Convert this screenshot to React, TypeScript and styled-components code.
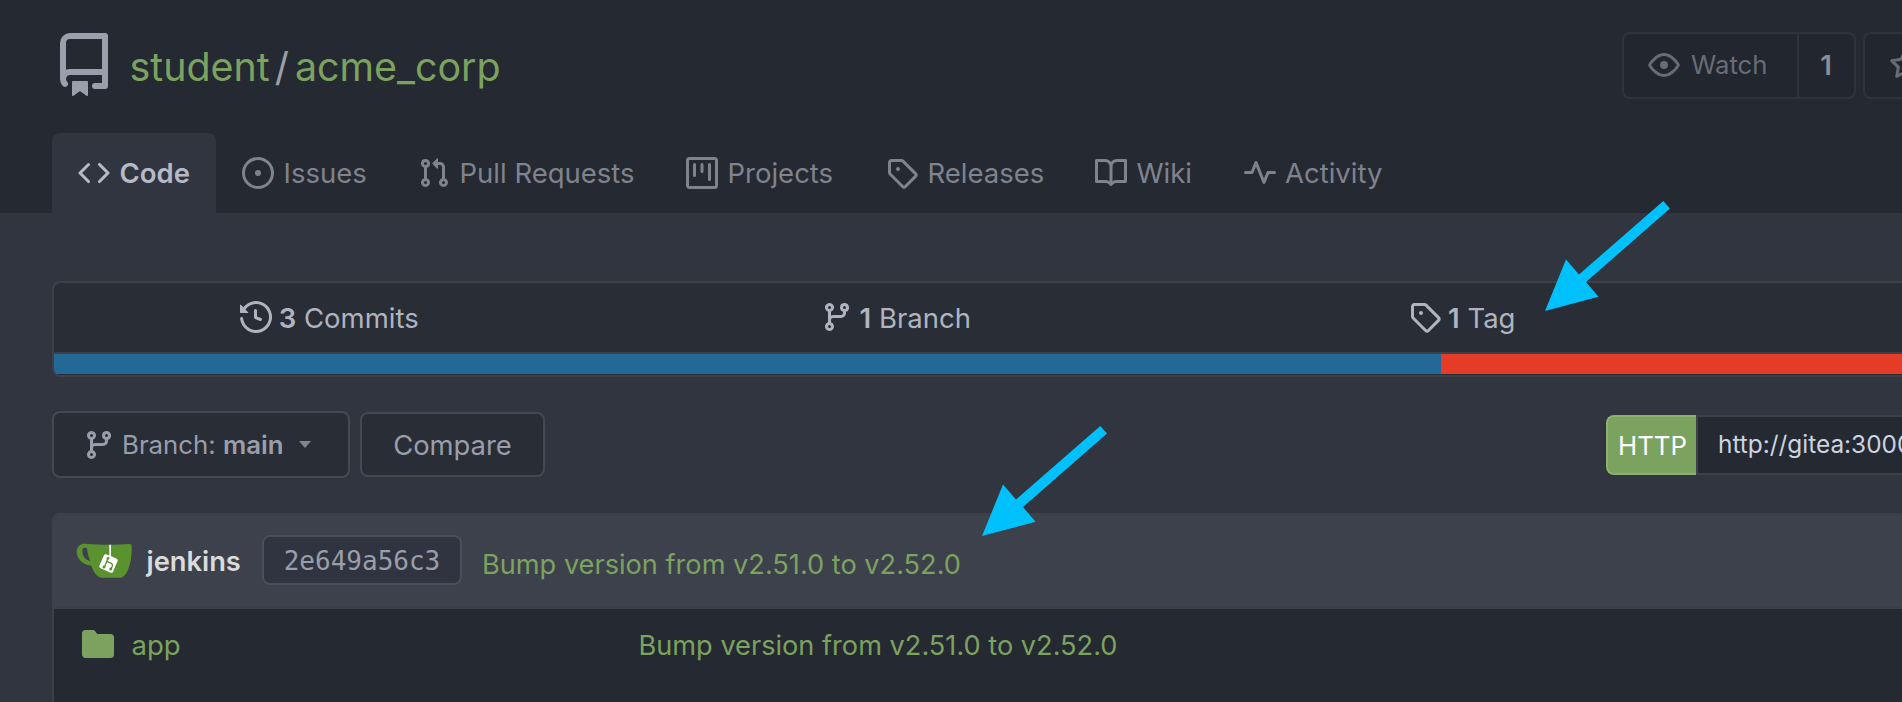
import React from 'react';
import styled, { createGlobalStyle } from 'styled-components';

const color = {
  page: '#313540',
  header: '#252931',
  box: '#292d36',
  border: '#3d4049',
  green: '#7ca25f',
  text: '#b0b4c0',
  muted: '#7f838e',
  button: '#9a9eaa',
};

const GlobalStyle = createGlobalStyle`
  * { box-sizing: border-box; }
  body {
    margin: 0;
    background: ${color.page};
    font-family: Inter, "Liberation Sans", sans-serif;
    overflow: hidden;
  }
`;

/* 16-unit octicon outlines */
const icons = {
  repo: 'M2 2.5A2.5 2.5 0 014.5 0h8.75a.75.75 0 01.75.75v12.5a.75.75 0 01-.75.75h-2.5a.75.75 0 110-1.5h1.75v-2h-8a1 1 0 00-.714 1.7.75.75 0 01-1.072 1.05A2.495 2.495 0 012 11.5v-9zm10.5-1V9h-8c-.356 0-.694.074-1 .208V2.5a1 1 0 011-1h8zM5 12.25v3.25a.25.25 0 00.4.2l1.45-1.087a.25.25 0 01.3 0L8.6 15.7a.25.25 0 00.4-.2v-3.25a.25.25 0 00-.25-.25h-3.5a.25.25 0 00-.25.25z',
  code: 'M4.72 3.22a.75.75 0 011.06 1.06L2.06 8l3.72 3.72a.75.75 0 11-1.06 1.06L.47 8.53a.75.75 0 010-1.06l4.25-4.25zm6.56 0a.75.75 0 10-1.06 1.06L13.94 8l-3.72 3.72a.75.75 0 101.06 1.06l4.25-4.25a.75.75 0 000-1.06l-4.25-4.25z',
  issue: 'M8 9.5a1.5 1.5 0 100-3 1.5 1.5 0 000 3zM8 0a8 8 0 100 16A8 8 0 008 0zM1.5 8a6.5 6.5 0 1113 0 6.5 6.5 0 01-13 0z',
  pull: 'M7.177 3.073L9.573.677A.25.25 0 0110 .854v4.792a.25.25 0 01-.427.177L7.177 3.427a.25.25 0 010-.354zM3.75 2.5a.75.75 0 100 1.5.75.75 0 000-1.5zm-2.25.75a2.25 2.25 0 113 2.122v5.256a2.251 2.251 0 11-1.5 0V5.372A2.25 2.25 0 011.5 3.25zM11 2.5h-1V4h1a1 1 0 011 1v5.628a2.251 2.251 0 101.5 0V5A2.5 2.5 0 0011 2.5zm1 10.25a.75.75 0 111.5 0 .75.75 0 01-1.5 0zM3.75 12a.75.75 0 100 1.5.75.75 0 000-1.5z',
  project: 'M1.75 0A1.75 1.75 0 000 1.75v12.5C0 15.216.784 16 1.75 16h12.5A1.75 1.75 0 0016 14.25V1.75A1.75 1.75 0 0014.25 0H1.75zM1.5 1.75a.25.25 0 01.25-.25h12.5a.25.25 0 01.25.25v12.5a.25.25 0 01-.25.25H1.75a.25.25 0 01-.25-.25V1.75zM11.75 3a.75.75 0 00-.75.75v7.5a.75.75 0 001.5 0v-7.5a.75.75 0 00-.75-.75zm-8.25.75a.75.75 0 011.5 0v5.5a.75.75 0 01-1.5 0v-5.5zM8 3a.75.75 0 00-.75.75v3.5a.75.75 0 001.5 0v-3.5A.75.75 0 008 3z',
  tag: 'M2.5 7.775V2.75a.25.25 0 01.25-.25h5.025a.25.25 0 01.177.073l6.25 6.25a.25.25 0 010 .354l-5.025 5.025a.25.25 0 01-.354 0l-6.25-6.25a.25.25 0 01-.073-.177zm-1.5 0V2.75C1 1.784 1.784 1 2.75 1h5.025c.464 0 .91.184 1.238.513l6.25 6.25a1.75 1.75 0 010 2.474l-5.026 5.026a1.75 1.75 0 01-2.474 0l-6.25-6.25A1.75 1.75 0 011 7.775zM6 5a1 1 0 100 2 1 1 0 000-2z',
  book: 'M0 1.75A.75.75 0 01.75 1h4.253c1.227 0 2.317.59 3 1.501A3.744 3.744 0 0111.006 1h4.245a.75.75 0 01.75.75v10.5a.75.75 0 01-.75.75h-4.507a2.25 2.25 0 00-1.591.659l-.622.621a.75.75 0 01-1.06 0l-.622-.621A2.25 2.25 0 005.258 13H.75a.75.75 0 01-.75-.75V1.75zm8.755 3a2.25 2.25 0 012.25-2.25H14.5v9h-3.757c-.71 0-1.4.201-1.992.572l.004-7.322zm-1.504 7.324l.004-5.073-.002-2.253A2.25 2.25 0 005.003 2.5H1.5v9h3.757a3.75 3.75 0 011.994.574z',
  pulse: 'M6 2a.75.75 0 01.696.471L10 10.731l1.304-3.26A.75.75 0 0112 7h3.25a.75.75 0 010 1.5h-2.742l-1.812 4.528a.75.75 0 01-1.392 0L6 4.77 4.696 8.03A.75.75 0 014 8.5H.75a.75.75 0 010-1.5h2.742l1.812-4.529A.75.75 0 016 2z',
  eye: 'M1.679 7.932c.412-.621 1.242-1.75 2.366-2.717C5.175 4.242 6.527 3.5 8 3.5c1.473 0 2.824.742 3.955 1.715 1.124.967 1.954 2.096 2.366 2.717a.119.119 0 010 .136c-.412.621-1.242 1.75-2.366 2.717C10.825 11.758 9.473 12.5 8 12.5c-1.473 0-2.824-.742-3.955-1.715C2.92 9.818 2.09 8.69 1.679 8.068a.119.119 0 010-.136zM8 2c-1.981 0-3.67.992-4.933 2.078C1.797 5.169.88 6.423.43 7.1a1.619 1.619 0 000 1.798c.45.678 1.367 1.932 2.637 3.024C4.329 13.008 6.019 14 8 14c1.981 0 3.67-.992 4.933-2.078 1.27-1.091 2.187-2.345 2.637-3.023a1.619 1.619 0 000-1.798c-.45-.678-1.367-1.932-2.637-3.023C11.671 2.992 9.981 2 8 2zm0 8a2 2 0 100-4 2 2 0 000 4z',
  star: 'M8 .25a.75.75 0 01.673.418l1.882 3.815 4.21.612a.75.75 0 01.416 1.279l-3.046 2.97.719 4.192a.75.75 0 01-1.088.791L8 12.347l-3.766 1.98a.75.75 0 01-1.088-.79l.72-4.194L.818 6.374a.75.75 0 01.416-1.28l4.21-.611L7.327.668A.75.75 0 018 .25zm0 2.445L6.615 5.5a.75.75 0 01-.564.41l-3.097.45 2.24 2.184a.75.75 0 01.216.664l-.528 3.084 2.769-1.456a.75.75 0 01.698 0l2.77 1.456-.53-3.084a.75.75 0 01.216-.664l2.24-2.183-3.096-.45a.75.75 0 01-.564-.41L8 2.694v.001z',
  history: 'M1.643 3.143L.427 1.927A.25.25 0 000 2.104V5.75c0 .138.112.25.25.25h3.646a.25.25 0 00.177-.427L2.715 4.215a6.5 6.5 0 11-1.18 4.458.75.75 0 10-1.493.154 8.001 8.001 0 101.6-5.684zM7.75 4a.75.75 0 01.75.75v2.992l2.028.812a.75.75 0 01-.557 1.392l-2.5-1A.75.75 0 017 8.25v-3.5A.75.75 0 017.75 4z',
  branch: 'M11.75 2.5a.75.75 0 100 1.5.75.75 0 000-1.5zm-2.25.75a2.25 2.25 0 113 2.122V6A2.5 2.5 0 0110 8.5H6a1 1 0 00-1 1v1.128a2.251 2.251 0 11-1.5 0V5.372a2.25 2.25 0 111.5 0v1.836A2.492 2.492 0 016 7h4a1 1 0 001-1v-.628A2.25 2.25 0 019.5 3.25zM4.25 12a.75.75 0 100 1.5.75.75 0 000-1.5zM3.5 3.25a.75.75 0 111.5 0 .75.75 0 01-1.5 0z',
  folder: 'M1.75 1A1.75 1.75 0 000 2.75v10.5C0 14.216.784 15 1.75 15h12.5A1.75 1.75 0 0016 13.25v-8.5A1.75 1.75 0 0014.25 3h-6.5a.25.25 0 01-.2-.1l-.9-1.2c-.33-.44-.85-.7-1.4-.7h-3.5z',
};

type IconName = keyof typeof icons;

const Svg = styled.svg`
  display: block;
  flex: none;
  fill: currentColor;
`;

const Icon = ({ name, size = 32 }: { name: IconName; size?: number }) => (
  <Svg width={size} height={size} viewBox="0 0 16 16" aria-hidden="true">
    <path fillRule="evenodd" d={icons[name]} />
  </Svg>
);

const Page = styled.div`
  position: relative;
  display: flex;
  flex-direction: column;
  width: 100%;
  height: 702px;
  overflow: hidden;
  color: ${color.text};
  font-size: 27.5px;
  line-height: 32px;
  white-space: nowrap;
`;

const Header = styled.header`
  display: flex;
  flex-direction: column;
  flex: none;
  height: 213px;
  padding-left: 52px;
  background: ${color.header};
`;

const TitleRow = styled.div`
  display: flex;
  align-items: center;
  height: 133px;
  padding-bottom: 3px;
  color: #9b9fab;
`;

const Title = styled.h1`
  display: flex;
  flex: 1;
  margin: 0;
  padding: 3px 0 0 13.5px;
  font-size: 39.4px;
  font-weight: 400;
  line-height: 48px;
`;

const RepoLink = styled.a`
  color: ${color.green};
`;

const Slash = styled.span`
  padding: 0 6px 0 5px;
`;

const Actions = styled.div`
  display: flex;
  flex: none;
  gap: 7px;
  width: 280px;
`;

const ActionGroup = styled.div`
  display: flex;
  flex: none;
  height: 67px;
  overflow: hidden;
  border: 2px solid #2f333c;
  border-radius: 8px;
  background: #22262f;
  color: #686c77;
  font-size: 25.7px;
`;

const ActionLabel = styled.div`
  display: flex;
  align-items: center;
  gap: 11px;
  width: 173px;
  padding-left: 24px;
`;

const ActionCount = styled.div`
  display: flex;
  align-items: center;
  justify-content: center;
  width: 57px;
  padding-right: 1px;
  border-left: 2px solid #2f333c;
  color: #8a8e99;
  font-size: 27.5px;
  font-weight: 600;
`;

const Tabs = styled.nav`
  display: flex;
  height: 80px;
`;

const Tab = styled.a<{ $width: number; $active?: boolean }>`
  display: flex;
  align-items: center;
  gap: 9.5px;
  width: ${(p) => p.$width}px;
  padding-left: 26px;
  border-radius: 8px 8px 0 0;
  background: ${(p) => (p.$active ? color.page : 'transparent')};
  color: ${(p) => (p.$active ? '#b6bac5' : color.muted)};
  font-weight: ${(p) => (p.$active ? 600 : 400)};
`;

const Content = styled.main`
  display: flex;
  flex-direction: column;
  padding: 68px 0 0 52px;
`;

const StatsBox = styled.section`
  flex: none;
  height: 96px;
  overflow: hidden;
  border: 2px solid ${color.border};
  border-right: 0;
  border-radius: 8px 0 0 8px;
  background: ${color.box};
`;

const Stats = styled.div`
  display: grid;
  grid-template-columns: 566.5px 566.5px 566.5px;
  height: 71px;
  border-bottom: 2px solid ${color.border};
`;

const Stat = styled.div`
  display: flex;
  align-items: center;
  justify-content: center;
  gap: 7px;
  padding: 0 16px 1px 0;
`;

const StatText = styled.span`
  padding-top: 2px;
`;

const Strong = styled.strong`
  font-weight: 600;
`;

const LanguageBar = styled.div`
  display: flex;
  height: 20px;
`;

const Language = styled.div<{ $color: string; $width?: number }>`
  flex: ${(p) => (p.$width ? `0 0 ${p.$width}px` : '1')};
  background: ${(p) => p.$color};
`;

const Toolbar = styled.div`
  display: flex;
  align-items: center;
  flex: none;
  height: 67px;
  margin: 34px 0 35px;
`;

const Button = styled.button<{ $width: number; $height: number }>`
  display: flex;
  align-items: center;
  justify-content: center;
  width: ${(p) => p.$width}px;
  height: ${(p) => p.$height}px;
  margin: 0 10.5px 0 0;
  padding: 0;
  border: 2px solid #464853;
  border-radius: 8px;
  background: ${color.box};
  color: ${color.button};
  font: 400 27.4px/32px Inter, "Liberation Sans", sans-serif;
`;

const BranchButton = styled(Button)`
  justify-content: flex-start;
  padding-left: 29px;
`;

const BranchText = styled.span`
  padding: 1px 15.5px 0 7px;
  font-size: 25.8px;
`;

const Caret = styled.span`
  width: 0;
  border: solid transparent;
  border-width: 7.5px 6.5px 0;
  border-top-color: #81858f;
`;

const CloneUrl = styled.div`
  display: flex;
  width: 296px;
  height: 60px;
  margin-left: auto;
`;

const Protocol = styled.button`
  flex: none;
  width: 90px;
  padding: 2px 0 0 1px;
  border: 2px solid #8cb06e;
  border-right-width: 0;
  border-radius: 8px 0 0 8px;
  background: ${color.green};
  color: #fff;
  font: 400 25.8px/32px Inter, "Liberation Sans", sans-serif;
`;

const Url = styled.div`
  flex: 1;
  overflow: hidden;
  padding: 11px 0 0 20px;
  border: 2px solid ${color.border};
  border-right: 0;
  background: ${color.header};
  color: #cbd4e1;
  font-size: 24.4px;
`;

const FileTable = styled.section`
  flex: none;
  border: 2px solid ${color.border};
  border-right: 0;
  border-radius: 8px 0 0 0;
  background: ${color.header};
  overflow: hidden;
`;

const LatestCommit = styled.div`
  display: flex;
  align-items: center;
  height: 94px;
  padding-left: 22px;
  border-bottom: 2px solid #3a3e49;
  background: #3d414b;
`;

const Author = styled.span`
  width: 115.5px;
  margin-left: 14.5px;
  padding-top: 2px;
  color: #dbdbdb;
  font-size: 27.3px;
  font-weight: 600;
`;

const Sha = styled.span`
  display: flex;
  align-items: center;
  justify-content: center;
  width: 200px;
  height: 50px;
  margin-bottom: 2px;
  padding-top: 2px;
  border: 2px solid #4b4e5a;
  border-radius: 8px;
  background: #303440;
  color: #9a9eaa;
  font: 26px/30px "DejaVu Sans Mono", monospace;
`;

const CommitMessage = styled.a`
  color: ${color.green};
  font-size: 27.17px;
`;

const HeaderMessage = styled(CommitMessage)`
  padding: 8px 0 0 20px;
`;

const FileRow = styled.div<{ $height: number }>`
  display: grid;
  grid-template-columns: 556.5px 1fr;
  align-items: center;
  height: ${(p) => p.$height}px;
  padding-left: 28px;
  border-bottom: 1px solid #282b34;
  color: ${color.green};
`;

const RowMessage = styled(CommitMessage)`
  padding-top: 1px;
`;

const FileName = styled.a`
  display: flex;
  align-items: center;
  gap: 17.5px;
  padding-bottom: 3px;
`;

const FileLabel = styled.span`
  padding-top: 2px;
`;

const Arrow = styled.svg<{ $left: number; $top: number }>`
  position: absolute;
  left: ${(p) => p.$left}px;
  top: ${(p) => p.$top}px;
  width: 125px;
  height: 110px;
  fill: #00c1fc;
`;

const Pointer = ({ left, top }: { left: number; top: number }) => (
  <Arrow $left={left} $top={top} viewBox="0 0 125 110">
    <path d="M0 110 L21 58.5 L34 73.5 L118.3 0 L125 7.5 L41 81 L53.5 95.7Z" />
  </Arrow>
);

const Avatar = () => (
  <Svg width="56" height="56" viewBox="18 9 168 168" aria-hidden="true">
    <path
      fill="#59922f"
      fillRule="evenodd"
      d="M52 42C37 38 21 45 20 64C20 86 36 104 64 107C68 121 78 136 88 141Q92 144 99 143L153 143Q161 142 169 130C182 108 186 76 185 47Q185 42 180 42C140 45 90 45 52 42ZM37 63Q37 54 44 53.500L51 54C52 67 55 80 61 93C46 91 37 78 37 63Z"
    />
    <path fill="#fff" d="M118 44h5v34l17 8q5 3 3 7l-14 32q-2 5-7 3l-30-13q-6-3-4-8l14-31q2-5 7-3l9 4z" />
    <g fill="none" stroke="#59922f" strokeWidth="4">
      <path d="M114 85L103 112M110 94l14 6q5 3 3 8l-4 9" />
    </g>
    <g fill="#59922f">
      <circle cx="114" cy="85" r="4" />
      <circle cx="102" cy="111" r="4.500" />
      <circle cx="122" cy="117" r="4.500" />
    </g>
  </Svg>
);

const tabs: { icon: IconName; label: string; width: number }[] = [
  { icon: 'code', label: 'Code', width: 164 },
  { icon: 'issue', label: 'Issues', width: 176 },
  { icon: 'pull', label: 'Pull Requests', width: 268 },
  { icon: 'project', label: 'Projects', width: 200 },
  { icon: 'tag', label: 'Releases', width: 209 },
  { icon: 'book', label: 'Wiki', width: 148.5 },
  { icon: 'pulse', label: 'Activity', width: 164 },
];

const stats: { icon: IconName; count: number; label: string }[] = [
  { icon: 'history', count: 3, label: 'Commits' },
  { icon: 'branch', count: 1, label: 'Branch' },
  { icon: 'tag', count: 1, label: 'Tag' },
];

export default function App() {
  return (
    <Page>
      <GlobalStyle />
      <Header>
        <TitleRow>
          <Icon name="repo" size={64} />
          <Title>
            <RepoLink>student</RepoLink>
            <Slash>/</Slash>
            <RepoLink>acme_corp</RepoLink>
          </Title>
          <Actions>
            <ActionGroup>
              <ActionLabel>
                <Icon name="eye" />
                Watch
              </ActionLabel>
              <ActionCount>1</ActionCount>
            </ActionGroup>
            <ActionGroup>
              <ActionLabel>
                <Icon name="star" />
              </ActionLabel>
            </ActionGroup>
          </Actions>
        </TitleRow>
        <Tabs>
          {tabs.map((tab, i) => (
            <Tab key={tab.label} $width={tab.width} $active={i === 0}>
              <Icon name={tab.icon} />
              {tab.label}
            </Tab>
          ))}
        </Tabs>
      </Header>
      <Content>
        <StatsBox>
          <Stats>
            {stats.map((stat) => (
              <Stat key={stat.label}>
                <Icon name={stat.icon} />
                <StatText>
                  <Strong>{stat.count}</Strong> {stat.label}
                </StatText>
              </Stat>
            ))}
          </Stats>
          <LanguageBar>
            <Language $color="#246896" $width={1387} />
            <Language $color="#e43c27" />
          </LanguageBar>
        </StatsBox>
        <Toolbar>
          <BranchButton $width={297.5} $height={67}>
            <Icon name="branch" />
            <BranchText>
              Branch: <Strong>main</Strong>
            </BranchText>
            <Caret />
          </BranchButton>
          <Button $width={185} $height={65}>
            Compare
          </Button>
          <CloneUrl>
            <Protocol>HTTP</Protocol>
            <Url>http://gitea:3000</Url>
          </CloneUrl>
        </Toolbar>
        <FileTable>
          <LatestCommit>
            <Avatar />
            <Author>jenkins</Author>
            <Sha>2e649a56c3</Sha>
            <HeaderMessage>Bump version from v2.51.0 to v2.52.0</HeaderMessage>
          </LatestCommit>
          <FileRow $height={74}>
            <FileName>
              <Icon name="folder" />
              <FileLabel>app</FileLabel>
            </FileName>
            <RowMessage>Bump version from v2.51.0 to v2.52.0</RowMessage>
          </FileRow>
          <FileRow $height={19} />
        </FileTable>
      </Content>
      <Pointer left={1545} top={201} />
      <Pointer left={982.4} top={425.700} />
    </Page>
  );
}
